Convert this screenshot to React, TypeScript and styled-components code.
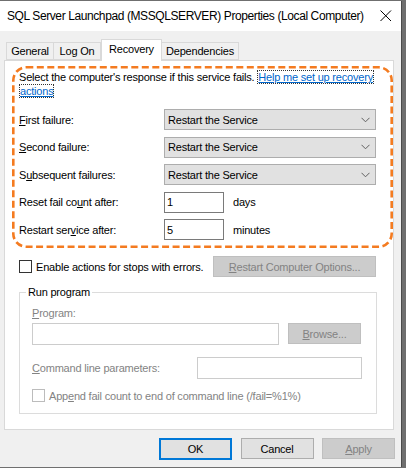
import React from "react";
import styled, { createGlobalStyle } from "styled-components";

const Global = createGlobalStyle`
  html, body { margin: 0; padding: 0; }
  body {
    background: #6f6f6f;
    font-family: "Liberation Sans", Arial, sans-serif;
    font-size: 11px;
    letter-spacing: -0.2px;
    color: #000;
    width: 406px;
    height: 468px;
    overflow: hidden;
  }
  * { box-sizing: border-box; }
`;

const Window = styled.div`
  margin-top: 1px;
  width: 402px;
  height: 466px;
  background: #f0f0f0;
  border-right: 1px solid #4b4b4b;
  display: flex;
  flex-direction: column;
`;

const TitleBar = styled.div`
  height: 30px;
  background: #fff;
  display: flex;
  align-items: center;
  padding: 0 0 0 7px;
  flex-shrink: 0;
`;

const TitleText = styled.div`
  flex: 1;
  min-width: 0;
  font-size: 12px;
  letter-spacing: -0.4px;
  line-height: 16px;
  white-space: nowrap;
  overflow: hidden;
`;

const CloseBox = styled.div`
  width: 30px;
  height: 30px;
  display: flex;
  align-items: center;
  justify-content: center;
  flex-shrink: 0;
  margin-right: 0;
`;

const Body = styled.div`
  padding: 8px 0 0 4px;
  display: flex;
  flex-direction: column;
`;

const TabStrip = styled.div`
  display: flex;
  align-items: flex-end;
  height: 21px;
  padding-left: 2px;
  position: relative;
  z-index: 1;
`;

const Tab = styled.div<{ $w: number; $active?: boolean }>`
  width: ${(p) => p.$w}px;
  height: ${(p) => (p.$active ? 22 : 18)}px;
  margin-bottom: ${(p) => (p.$active ? -1 : 0)}px;
  background: ${(p) => (p.$active ? "#fff" : "#f0f0f0")};
  border: 1px solid #d9d9d9;
  border-bottom: ${(p) => (p.$active ? "none" : "1px solid #d9d9d9")};
  margin-left: ${(p) => (p.$active ? 0 : -1)}px;
  display: flex;
  align-items: center;
  justify-content: center;
  padding-bottom: ${(p) => (p.$active ? 3 : 0)}px;
  &:first-child { margin-left: 0; }
`;

const Panel = styled.div`
  width: 390px;
  height: 370px;
  background: #fff;
  border: 1px solid #d9d9d9;
  display: flex;
  flex-direction: column;
`;

const OrangeBox = styled.div`
  position: relative;
  margin: 5px 0 0 7px;
  width: 381px;
  height: 182px;
  padding: 4px 17px 0 7px;
`;

const OrangeOutline = styled.svg`
  position: absolute;
  left: 0;
  top: 0;
  pointer-events: none;
`;

const Intro = styled.div`
  line-height: 14px;
`;

const HelpLink = styled.span`
  color: #0066cc;
  text-decoration: underline;
  border: 1px dotted #333;
  -webkit-box-decoration-break: clone;
  box-decoration-break: clone;
`;

const FormGrid = styled.div`
  margin-top: 11px;
  display: grid;
  grid-template-columns: 145px auto;
  row-gap: 6.5px;
  align-items: center;
`;

const Label = styled.div<{ $disabled?: boolean }>`
  line-height: 14px;
  color: ${(p) => (p.$disabled ? "#838383" : "#000")};
  white-space: nowrap;
`;

const Key = styled.span`
  text-decoration: underline;
  text-underline-offset: 1px;
`;

const Combo = styled.div`
  width: 212px;
  height: 21px;
  background: #e1e1e1;
  border: 1px solid #adadad;
  display: flex;
  align-items: center;
  justify-content: space-between;
  padding: 0 5px 0 3px;
`;

const InputRow = styled.div`
  display: flex;
  align-items: center;
  gap: 9px;
`;

const TextBox = styled.div<{ $w: number; $h?: number; $disabled?: boolean }>`
  width: ${(p) => p.$w}px;
  height: ${(p) => p.$h ?? 21}px;
  border: 1px solid ${(p) => (p.$disabled ? "#cccccc" : "#7a7a7a")};
  background: #fff;
  display: flex;
  align-items: center;
  padding-left: 2px;
  flex-shrink: 0;
`;

const CheckRow = styled.div`
  margin-top: 8px;
  padding: 0 17px 0 14px;
  display: flex;
  align-items: center;
  justify-content: space-between;
  height: 21px;
`;

const CheckLabel = styled.div<{ $disabled?: boolean }>`
  display: flex;
  align-items: center;
  gap: 4px;
  color: ${(p) => (p.$disabled ? "#838383" : "#000")};
  line-height: 14px;
`;

const CheckBox = styled.span<{ $disabled?: boolean }>`
  width: 13px;
  height: 13px;
  border: 1px solid ${(p) => (p.$disabled ? "#bcbcbc" : "#333")};
  background: #fff;
  flex-shrink: 0;
`;

const Button = styled.div<{ $w: number; $disabled?: boolean; $default?: boolean }>`
  width: ${(p) => p.$w}px;
  height: ${(p) => (p.$default ? 22 : 21)}px;
  background: ${(p) => (p.$disabled ? "#cccccc" : "#e1e1e1")};
  border: ${(p) =>
    p.$default ? "2px solid #0078d7" : p.$disabled ? "1px solid #bfbfbf" : "1px solid #adadad"};
  color: ${(p) => (p.$disabled ? "#838383" : "#000")};
  display: flex;
  align-items: center;
  justify-content: center;
  flex-shrink: 0;
`;

const Group = styled.fieldset`
  margin: 9px 0 0 14px;
  width: 358px;
  height: 128px;
  border: 1px solid #dcdcdc;
  padding: 0 0 0 12px;
  display: flex;
  flex-direction: column;
  min-inline-size: 0;
`;

const Legend = styled.legend`
  margin-left: -6px;
  padding: 0 2px;
  line-height: 13px;
`;

const GroupLabel = styled(Label)`
  margin-top: 6.5px;
`;

const ProgramRow = styled.div`
  margin-top: 3px;
  display: flex;
  align-items: center;
  gap: 9px;
`;

const CmdRow = styled.div`
  margin-top: 12px;
  display: grid;
  grid-template-columns: 165px auto;
  align-items: center;
`;

const AppendRow = styled(CheckLabel)`
  margin-top: 10px;
`;

const Footer = styled.div`
  margin-top: 8px;
  display: flex;
  justify-content: flex-end;
  gap: 8.5px;
  padding-right: 6px;
`;

const Chevron = () => (
  <svg width="9" height="6" viewBox="0 0 9 6">
    <path d="M0.5 0.8 L4.5 4.8 L8.5 0.8" fill="none" stroke="#606060" strokeWidth="1" />
  </svg>
);

const CloseIcon = () => (
  <svg width="12" height="12" viewBox="0 0 12 12">
    <path d="M0.5 0.5 L11 11 M11 0.5 L0.5 11" stroke="#000" strokeWidth="1" />
  </svg>
);

const actions = ["First failure:", "Second failure:", "Subsequent failures:"];
const keyIdx = [0, 0, 1];

const LabelWithKey = ({ text, idx }: { text: string; idx: number }) => (
  <>
    {text.slice(0, idx)}
    <Key>{text[idx]}</Key>
    {text.slice(idx + 1)}
  </>
);

export default function App() {
  return (
    <>
      <Global />
      <Window>
        <TitleBar>
          <TitleText>SQL Server Launchpad (MSSQLSERVER) Properties (Local Computer)</TitleText>
          <CloseBox>
            <CloseIcon />
          </CloseBox>
        </TitleBar>
        <Body>
          <TabStrip>
            <Tab $w={48}>General</Tab>
            <Tab $w={48}>Log On</Tab>
            <Tab $w={61} $active>
              Recovery
            </Tab>
            <Tab $w={78}>Dependencies</Tab>
          </TabStrip>
          <Panel>
            <OrangeBox>
              <OrangeOutline width="381" height="182">
                <rect
                  x="1.3"
                  y="1.3"
                  width="378.4"
                  height="179.4"
                  rx="13"
                  ry="13"
                  fill="none"
                  stroke="#f47b20"
                  strokeWidth="2.6"
                  strokeDasharray="7 3.5"
                />
              </OrangeOutline>
              <Intro>
                Select the computer's response if this service fails.{" "}
                <HelpLink>
                  Help me set up recovery
                  <br />
                  actions
                </HelpLink>
              </Intro>
              <FormGrid>
                {actions.map((a, i) => (
                  <React.Fragment key={a}>
                    <Label>
                      <LabelWithKey text={a} idx={keyIdx[i]} />
                    </Label>
                    <Combo>
                      <span>Restart the Service</span>
                      <Chevron />
                    </Combo>
                  </React.Fragment>
                ))}
                <Label>
                  <LabelWithKey text="Reset fail count after:" idx={13} />
                </Label>
                <InputRow>
                  <TextBox $w={60}>1</TextBox>
                  <span>days</span>
                </InputRow>
                <Label>
                  <LabelWithKey text="Restart service after:" idx={11} />
                </Label>
                <InputRow>
                  <TextBox $w={60}>5</TextBox>
                  <span>minutes</span>
                </InputRow>
              </FormGrid>
            </OrangeBox>
            <CheckRow>
              <CheckLabel>
                <CheckBox />
                <span>Enable actions for stops with errors.</span>
              </CheckLabel>
              <Button $w={163} $disabled>
                <span>
                  <Key>R</Key>estart Computer Options...
                </span>
              </Button>
            </CheckRow>
            <Group>
              <Legend>Run program</Legend>
              <GroupLabel $disabled>
                <Key>P</Key>rogram:
              </GroupLabel>
              <ProgramRow>
                <TextBox $w={247} $h={22} $disabled />
                <Button $w={73} $disabled>
                  <span>
                    <Key>B</Key>rowse...
                  </span>
                </Button>
              </ProgramRow>
              <CmdRow>
                <Label $disabled>
                  <Key>C</Key>ommand line parameters:
                </Label>
                <TextBox $w={165} $h={22} $disabled />
              </CmdRow>
              <AppendRow $disabled>
                <CheckBox $disabled />
                <span>
                  App<Key>e</Key>nd fail count to end of command line (/fail=%1%)
                </span>
              </AppendRow>
            </Group>
          </Panel>
          <Footer>
            <Button $w={73} $default>
              OK
            </Button>
            <Button $w={73}>Cancel</Button>
            <Button $w={73} $disabled>
              <span>
                <Key>A</Key>pply
              </span>
            </Button>
          </Footer>
        </Body>
      </Window>
    </>
  );
}
